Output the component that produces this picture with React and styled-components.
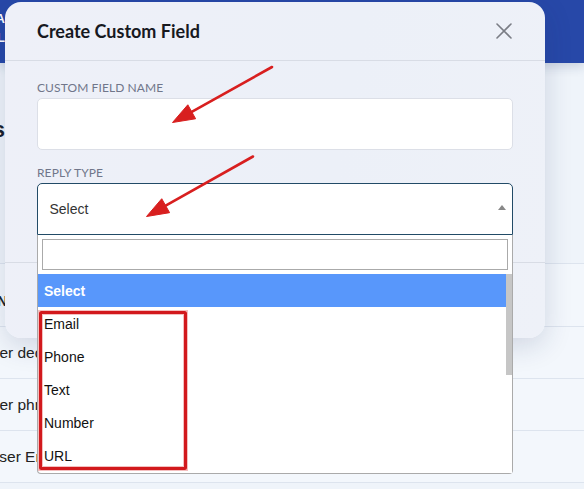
import React from 'react';
import styled, { createGlobalStyle } from 'styled-components';

const GlobalStyle = createGlobalStyle`
  html, body {
    margin: 0;
    padding: 0;
    height: 100%;
    overflow: hidden;
  }
  body {
    font-family: "Liberation Sans", Arial, sans-serif;
    background: #eef3fa;
  }
`;

const replyTypes = [
  'Select', 'Email', 'Phone', 'Text', 'Number', 'URL',
  'Date', 'Dropdown', 'Checkbox', 'Multi Select', 'Textarea', 'File',
];

const rows = [
  { text: 'Customer decision', shift: -54 },
  { text: 'Customer phn number', shift: -54 },
  { text: 'Guest user Email', shift: -55 },
];

// arrow head geometry, computed from tail -> tip
function arrowHead(x1, y1, x2, y2, len = 22, half = 8) {
  const dx = x2 - x1;
  const dy = y2 - y1;
  const d = Math.hypot(dx, dy);
  const ux = dx / d;
  const uy = dy / d;
  const bx = x2 - ux * len;
  const by = y2 - uy * len;
  const nx = -uy;
  const ny = ux;
  return {
    base: [bx, by],
    points: `${x2},${y2} ${bx + nx * half},${by + ny * half} ${bx - nx * half},${by - ny * half}`,
  };
}

function Arrow({ from, to }) {
  const head = arrowHead(from[0], from[1], to[0], to[1]);
  return (
    <g>
      <line x1={from[0]} y1={from[1]} x2={head.base[0]} y2={head.base[1]} stroke="#d81f1f" strokeWidth="2.6" strokeLinecap="round" />
      <polygon points={head.points} fill="#d81f1f" stroke="#d81f1f" strokeWidth="1" strokeLinejoin="round" />
    </g>
  );
}

function App() {
  return (
    <Page>
      <GlobalStyle />
      <TopBar>
        <Logo>
          <LogoLine>ADMIN AREA</LogoLine>
          <LogoLine>PORTAL</LogoLine>
        </Logo>
      </TopBar>

      <Main>
        <TitleClip>
          <PageTitle>Custom Fields</PageTitle>
        </TitleClip>
        <Table>
          <HeaderRow>
            <Cell $shift={-47}>FIELD NAME</Cell>
          </HeaderRow>
          {rows.map(r => (
            <Row key={r.text}>
              <Cell $shift={r.shift}>{r.text}</Cell>
            </Row>
          ))}
        </Table>
      </Main>

      <Modal>
        <ModalHeader>
          <ModalTitle>Create Custom Field</ModalTitle>
          <CloseButton aria-label="close">
            <svg width="16" height="16" viewBox="0 0 16 16">
              <path d="M1 1 L15 15 M15 1 L1 15" stroke="#7a7d85" strokeWidth="1.6" strokeLinecap="round" />
            </svg>
          </CloseButton>
        </ModalHeader>

        <ModalBody>
          <Label>Custom Field Name</Label>
          <TextInput />

          <Label $spaced>Reply Type</Label>
          <SelectWrap>
            <SelectBox>
              <span>Select</span>
              <Caret />
            </SelectBox>
            <Dropdown>
              <SearchBox />
              <ListArea>
                <OptionList>
                  {replyTypes.map((t, i) => (
                    <Option key={t} $active={i === 0}>{t}</Option>
                  ))}
                </OptionList>
                <ScrollTrack>
                  <ScrollThumb />
                </ScrollTrack>
              </ListArea>
            </Dropdown>
          </SelectWrap>
        </ModalBody>

        <ModalFooter>
          <Button>Cancel</Button>
          <Button $primary>Save</Button>
        </ModalFooter>
      </Modal>

      <Annotations viewBox="0 0 584 489" width="584" height="489">
        <rect x="40.5" y="312.5" width="145" height="156" fill="none" stroke="#e04848" strokeOpacity="0.35" strokeWidth="5" />
        <rect x="40.5" y="312.5" width="145" height="156" fill="none" stroke="#d2191d" strokeWidth="3" rx="1" />
        <Arrow from={[272, 67]} to={[172.5, 122.5]} />
        <Arrow from={[253, 156.5]} to={[146.5, 216.5]} />
      </Annotations>
    </Page>
  );
}

export default App;

const Page = styled.div`
  position: relative;
  width: 584px;
  height: 489px;
  overflow: hidden;
  background: #eff4fa;
`;

const TopBar = styled.div`
  height: 63px;
  background: #2748a8;
  box-shadow: 0 4px 10px rgba(30, 50, 100, 0.18);
  display: flex;
  align-items: flex-start;
  padding-top: 12px;
  box-sizing: border-box;
`;

const Logo = styled.div`
  width: 5px;
  display: flex;
  flex-direction: column;
  align-items: flex-end;
  gap: 5px;
`;

const LogoLine = styled.div`
  color: #fff;
  font-weight: bold;
  font-size: 13px;
  line-height: 14px;
  white-space: nowrap;
`;

const Main = styled.div`
  display: flex;
  flex-direction: column;
`;

const TitleClip = styled.div`
  width: 5px;
  margin-top: 53px;
  display: flex;
  justify-content: flex-end;
`;

const PageTitle = styled.h1`
  margin: 0;
  font-size: 22px;
  line-height: 28px;
  font-weight: bold;
  color: #1b1f2a;
  white-space: nowrap;
`;

const Table = styled.div`
  margin-top: 119px;
  border-top: 1px solid #dde4ee;
  background: #f3f7fc;
`;

const HeaderRow = styled.div`
  height: 63px;
  box-sizing: border-box;
  padding-top: 29px;
  border-bottom: 1px solid #dde4ee;
  font-weight: bold;
  font-size: 14px;
  line-height: 16px;
  color: #1b1f2a;
`;

const Row = styled.div`
  height: 52px;
  box-sizing: border-box;
  display: flex;
  align-items: center;
  border-bottom: 1px solid #dde4ee;
  font-size: 15.5px;
  color: #222;
`;

const Cell = styled.div`
  margin-left: ${p => p.$shift}px;
  white-space: nowrap;
`;

const Modal = styled.div`
  position: absolute;
  top: 2px;
  left: 5px;
  width: 540px;
  height: 336px;
  display: flex;
  flex-direction: column;
  background: linear-gradient(100deg, #eef0f8 0%, #ecf0f8 60%, #eef1f8 100%);
  border-radius: 16px;
  box-shadow: 0 8px 28px rgba(25, 45, 95, 0.16);
`;

const ModalHeader = styled.div`
  height: 59px;
  flex-shrink: 0;
  box-sizing: border-box;
  display: flex;
  align-items: center;
  justify-content: space-between;
  padding: 0 33px 0 32px;
  border-bottom: 1px solid #d8dce5;
`;

const ModalTitle = styled.h2`
  margin: 0;
  font-family: Lato, "Liberation Sans", sans-serif;
  font-size: 18px;
  font-weight: 700;
  color: #17191f;
`;

const CloseButton = styled.button`
  border: none;
  background: none;
  padding: 0;
  width: 16px;
  height: 16px;
  display: flex;
`;

const ModalBody = styled.div`
  padding: 20px 32px 27px;
  display: flex;
  flex-direction: column;
`;

const Label = styled.div`
  font-family: Lato, "Liberation Sans", sans-serif;
  font-size: 12px;
  line-height: 14px;
  letter-spacing: 0.1px;
  text-transform: uppercase;
  color: #70768a;
  margin: ${p => (p.$spaced ? '16px' : '0')} 0 3px;
`;

const TextInput = styled.div`
  height: 52px;
  box-sizing: border-box;
  background: #fff;
  border: 1px solid #dcdfe7;
  border-radius: 5px;
`;

const SelectWrap = styled.div`
  position: relative;
`;

const SelectBox = styled.div`
  height: 52px;
  box-sizing: border-box;
  display: flex;
  align-items: center;
  justify-content: space-between;
  padding: 0 6px 0 11.5px;
  background: #fff;
  border: 1.5px solid #224b67;
  border-radius: 5px 5px 0 0;
  font-size: 14px;
  color: #333;
`;

const Caret = styled.span`
  width: 0;
  height: 0;
  margin-top: -3px;
  border-style: solid;
  border-width: 0 4px 5px 4px;
  border-color: transparent transparent #888 transparent;
`;

const Dropdown = styled.div`
  position: absolute;
  top: 100%;
  left: 0;
  right: 0;
  height: 239px;
  box-sizing: border-box;
  display: flex;
  flex-direction: column;
  background: #fff;
  border: 1px solid #aaa;
  border-top: none;
  border-radius: 0 0 4px 4px;
  z-index: 5;
`;

const SearchBox = styled.div`
  height: 31px;
  flex-shrink: 0;
  box-sizing: border-box;
  margin: 4px 4px 4px 4px;
  border: 1px solid #aaa;
`;

const ListArea = styled.div`
  flex: 1;
  display: flex;
  min-height: 0;
`;

const OptionList = styled.div`
  flex: 1;
  overflow: hidden;
`;

const ScrollTrack = styled.div`
  width: 6px;
  background: #fff;
`;

const ScrollThumb = styled.div`
  height: 101px;
  background: #c6c6c6;
`;

const Option = styled.div`
  height: 33px;
  display: flex;
  align-items: center;
  padding-left: 6px;
  font-size: 14px;
  color: ${p => (p.$active ? '#fff' : '#111')};
  font-weight: ${p => (p.$active ? 'bold' : 'normal')};
  background: ${p => (p.$active ? '#5897fb' : 'transparent')};
`;

const ModalFooter = styled.div`
  flex: 1;
  display: flex;
  align-items: center;
  justify-content: flex-end;
  gap: 10px;
  padding: 0 32px;
  border-top: 1px solid #d8dce5;
`;

const Button = styled.button`
  height: 38px;
  padding: 0 18px;
  border-radius: 6px;
  font-size: 14px;
  border: 1px solid ${p => (p.$primary ? '#2748a8' : '#cfd5e0')};
  background: ${p => (p.$primary ? '#2748a8' : '#fff')};
  color: ${p => (p.$primary ? '#fff' : '#333')};
`;

const Annotations = styled.svg`
  position: absolute;
  top: 0;
  left: 0;
  pointer-events: none;
  z-index: 10;
`;
